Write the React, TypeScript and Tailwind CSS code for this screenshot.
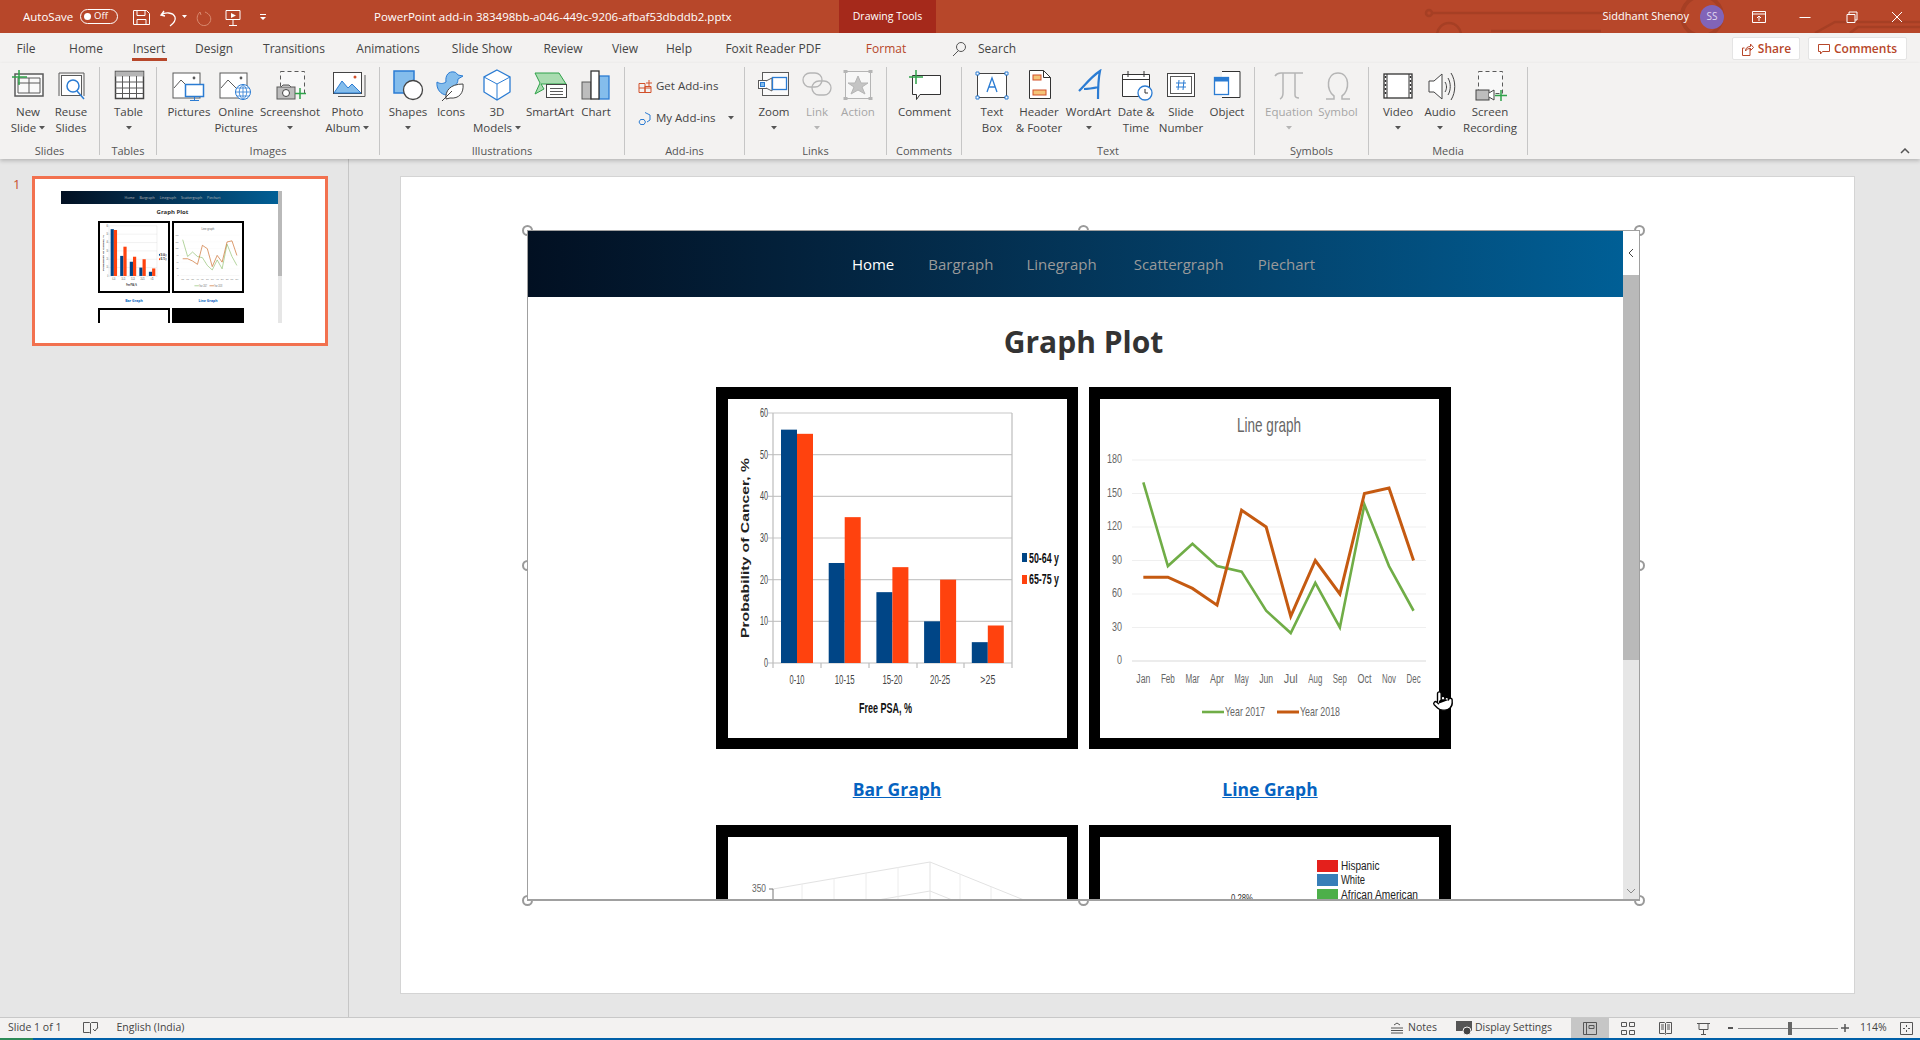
import { Fragment, type ReactNode } from 'react';
import { Pointer } from 'lucide-react';

const GRAY = '#5a5a5a';
const BLUE = '#2b7cd3';
const LIGHT = '#84bdec';
const GREEN = '#2fa24a';
const ORANGE = '#d2502a';
const DIM = '#b5b5b5';

const Mountain = () => (
  <>
    <rect x="2" y="4" width="27" height="25" fill="#fff" stroke={GRAY} />
    <path d="M3 19l7-8 8 8" fill="none" stroke={GRAY} />
    <circle cx="23" cy="9" r="1.4" fill={GRAY} />
  </>
);

const icons: Record<string, ReactNode> = {
  newSlide: (
    <>
      <rect x="5" y="5" width="28" height="22" fill="#fafafa" stroke={GRAY} strokeWidth="1.5" />
      <path d="M8 9h22v15H8zM19 9v15M8 14h22" fill="none" stroke={GRAY} />
      <path d="M9 1v15M2 8h15" stroke={GREEN} strokeWidth="1.5" />
    </>
  ),
  reuse: (
    <>
      <path d="M6 27V4h25v23" fill="none" stroke={GRAY} />
      <rect x="8.500" y="6.500" width="20" height="20" fill="#fff" stroke={GRAY} />
      <circle cx="20" cy="17" r="6" fill="#fff" stroke={BLUE} strokeWidth="1.5" />
      <path d="M24 22l7 8" stroke={BLUE} strokeWidth="1.5" />
    </>
  ),
  table: (
    <>
      <rect x="4.500" y="2.500" width="28" height="27" fill="#fff" stroke="#444" strokeWidth="1.5" />
      <rect x="4.500" y="2.500" width="28" height="5" fill="#b5b5b5" />
      <path d="M4 13h28M4 19h28M4 24.500h28M11.500 7v22M18.500 7v22M25.500 7v22" stroke={GRAY} />
    </>
  ),
  pictures: (
    <>
      <Mountain />
      <rect x="14.500" y="15.500" width="18" height="12" fill="#fff" stroke={BLUE} strokeWidth="1.5" />
      <path d="M23.500 28v3M19 31.500h9" stroke={BLUE} />
    </>
  ),
  online: (
    <>
      <Mountain />
      <circle cx="25" cy="23" r="7.500" fill="#fff" stroke={BLUE} />
      <path d="M17.500 23h15M25 15.500v15M19 19h12M19 27h12M25 15.500c-5 4-5 11 0 15M25 15.500c5 4 5 11 0 15" fill="none" stroke={BLUE} strokeWidth=".8" />
    </>
  ),
  screenshot: (
    <>
      <rect x="8.500" y="2.500" width="24" height="22" fill="#f8f8f8" stroke={GRAY} strokeDasharray="4 3" />
      <rect x="5" y="18" width="18" height="12" fill="#bdbdbd" stroke={GRAY} />
      <path d="M9 18l2-2h6l2 2" fill="#bdbdbd" stroke={GRAY} />
      <circle cx="14" cy="24" r="3.500" fill="#fff" stroke="#444" />
      <path d="M28 19v11M23 24.500h11" stroke={GREEN} strokeWidth="1.5" />
    </>
  ),
  album: (
    <>
      <path d="M8 27.500h27V6" fill="none" stroke={GRAY} />
      <rect x="3.500" y="3.500" width="28" height="21" fill="#fff" stroke="#444" />
      <path d="M4 24l8-12 6 7 4-4 9 9z" fill={LIGHT} stroke={BLUE} />
      <circle cx="25" cy="8" r="1.500" fill={ORANGE} />
    </>
  ),
  shapes: (
    <>
      <rect x="4" y="2" width="20" height="22" fill={LIGHT} stroke={BLUE} strokeWidth="1.5" />
      <circle cx="23" cy="21" r="9.500" fill="#fff" stroke="#444" strokeWidth="1.3" />
    </>
  ),
  duck: (
    <>
      <path d="M4 13c3 2 6 2 9 0-1-7 3-11 8-10 2 0 3 2 4 3l5 1-5 3c0 4-2 6-4 8l-7 8c-6 0-11-6-10-13z" fill={LIGHT} stroke={BLUE} />
      <path d="M13 30c-1-8 4-15 17-15 1 9-4 15-13 14zM9 32l10-10" fill="#fff" stroke="#444" />
    </>
  ),
  cube: (
    <>
      <path d="M18 1l13 7v15l-13 8-13-8V8z" fill="#fff" stroke={BLUE} strokeWidth="1.3" />
      <path d="M5 8l13 7 13-7M18 15v16" fill="none" stroke={BLUE} />
    </>
  ),
  smartart: (
    <>
      <path d="M3 4h24l7 11-7 0H9l3 5-9 5 5-11z" fill="#a9dcb0" stroke={GREEN} />
      <rect x="14.500" y="15.500" width="20" height="13" fill="#fff" stroke="#444" />
      <path d="M18 19.500h13M18 22.500h13M18 25.500h13" stroke={GRAY} />
    </>
  ),
  chart: (
    <>
      <rect x="4" y="13" width="9" height="17" fill="#bdbdbd" stroke={GRAY} />
      <rect x="21" y="7" width="10" height="23" fill={LIGHT} stroke={BLUE} strokeWidth="1.3" />
      <rect x="13" y="2" width="8" height="28" fill="#fff" stroke="#333" strokeWidth="1.3" />
    </>
  ),
  zoom: (
    <>
      <rect x="6.500" y="3.500" width="26" height="23" fill="#fafafa" stroke={GRAY} />
      <rect x="2.500" y="11.500" width="8" height="8" fill="#fff" stroke={GRAY} />
      <rect x="4.500" y="13.500" width="4" height="4" fill={LIGHT} stroke={BLUE} />
      <path d="M10 12l6-3v13l-6-3" fill="#fff" stroke={GRAY} />
      <rect x="16.500" y="8.500" width="14" height="12" fill="#fff" stroke={BLUE} strokeWidth="1.3" />
    </>
  ),
  link: (
    <>
      <rect x="4" y="4" width="19" height="14" rx="7" fill="none" stroke={DIM} strokeWidth="1.3" />
      <rect x="13" y="12" width="19" height="14" rx="7" fill="none" stroke={DIM} strokeWidth="1.3" />
    </>
  ),
  action: (
    <>
      <rect x="5.500" y="2.500" width="25" height="27" fill="#f7f7f7" stroke={DIM} />
      <path d="M18 7l3 7h7l-6 4 3 7-7-4-7 4 3-7-6-4h7z" fill="#c4c4c4" stroke={DIM} />
      <path d="M3.500 1h4v3h-4zM28.500 1h4v3h-4zM3.500 28h4v3h-4zM28.500 28h4v3h-4z" fill={DIM} />
    </>
  ),
  comment: (
    <>
      <path d="M4.500 6.500h28v19H12l-3.500 5v-5H4.500z" fill="#fff" stroke="#333" transform="translate(1 0)" />
      <path d="M9 1v14M2 8h14" stroke={GREEN} strokeWidth="1.5" />
    </>
  ),
  textBox: (
    <>
      <rect x="3.500" y="4.500" width="29" height="24" fill="#fff" stroke="#444" />
      <path d="M2 3h3v3H2zM31 3h3v3h-3zM2 27h3v3H2zM31 27h3v3h-3z" fill="#fff" stroke={BLUE} />
      <path d="M13 23l5-14 5 14M15 18h6" fill="none" stroke={BLUE} strokeWidth="1.3" />
    </>
  ),
  header: (
    <>
      <path d="M8.500 1.500h14l7 7v21h-21z" fill="#fff" stroke="#333" />
      <path d="M22.500 1.500v7h7" fill="none" stroke="#333" />
      <rect x="12" y="6" width="8" height="5" fill="#f4c478" stroke={ORANGE} />
      <rect x="12" y="21" width="13" height="5" fill="#f4c478" stroke={ORANGE} />
    </>
  ),
  wordart: <path d="M8 22C15 15 20 8 29 2c-2 9-2 18-2 28M13 20c5 0 10-1 15-2" fill="none" stroke={BLUE} strokeWidth="2.2" />,
  date: (
    <>
      <path d="M4.500 5.500h27v22h-27zM4.500 10.500h27M10 2v6M26 2v6" fill="#fff" stroke="#333" />
      <circle cx="27" cy="24" r="7" fill="#fff" stroke={BLUE} strokeWidth="1.3" />
      <path d="M27 20v4h3" fill="none" stroke="#333" />
    </>
  ),
  number: (
    <>
      <rect x="4.500" y="4.500" width="27" height="23" fill="#fff" stroke="#444" />
      <rect x="7.500" y="7.500" width="21" height="17" fill="#fff" stroke={GRAY} />
      <path d="M16 11l-1 10M21 11l-1 10M13 14h10M13 18h10" stroke={BLUE} />
    </>
  ),
  object: (
    <>
      <path d="M13 2.500h18v26H13" fill="#fff" stroke="#333" />
      <rect x="5.500" y="8.500" width="14" height="17" fill="#fff" stroke={BLUE} strokeWidth="1.3" />
      <rect x="5.500" y="8.500" width="14" height="4" fill={BLUE} />
    </>
  ),
  pi: <path d="M4 7c2-3 4-3 6-3h22M12 4v20c0 3-1 5-3 6M24 4v22c0 2 2 3 4 3" fill="none" stroke={DIM} strokeWidth="1.5" />,
  omega: <path d="M6 30h8v-3c-8-5-8-23 4-23s12 18 4 23v3h8" fill="none" stroke={DIM} strokeWidth="1.5" />,
  video: (
    <>
      <rect x="4" y="5" width="28" height="24" fill="#fff" stroke="#333" strokeWidth="1.3" />
      <path d="M7 5v24M29 5v24" stroke="#333" />
      <path d="M5.500 7v20M30.500 7v20" stroke="#333" strokeWidth="1.5" strokeDasharray="2 2" />
    </>
  ),
  audio: (
    <>
      <path d="M7 12h5l8-7v25l-8-7H7z" fill="#fff" stroke="#444" />
      <path d="M23 13c2 3 2 7 0 10M26 9c3 5 3 12 0 17M29 4c5 8 5 19 0 27" fill="none" stroke="#444" />
    </>
  ),
  recording: (
    <>
      <rect x="6.500" y="2.500" width="24" height="22" fill="#f8f8f8" stroke={GRAY} strokeDasharray="4 3" />
      <rect x="4" y="21" width="13" height="10" fill="#bdbdbd" stroke="#444" />
      <path d="M17 24l5-3v10l-5-3" fill="#fff" stroke="#444" />
      <path d="M29 21v11M23 26.500h12" stroke={GREEN} strokeWidth="1.5" />
    </>
  ),
};

type Btn = { icon: string; lines: string[]; w: number; caret?: boolean; off?: boolean };
type Group = { name: string; w: number; pl: number; items: Btn[] };

const groups: Group[] = [
  { name: 'Slides', w: 100, pl: 7, items: [
    { icon: 'newSlide', lines: ['New', 'Slide'], w: 42, caret: true },
    { icon: 'reuse', lines: ['Reuse', 'Slides'], w: 44 },
  ] },
  { name: 'Tables', w: 57, pl: 0, items: [{ icon: 'table', lines: ['Table', ''], w: 57, caret: true }] },
  { name: 'Images', w: 223, pl: 10, items: [
    { icon: 'pictures', lines: ['Pictures'], w: 44 },
    { icon: 'online', lines: ['Online', 'Pictures'], w: 50 },
    { icon: 'screenshot', lines: ['Screenshot', ''], w: 58, caret: true },
    { icon: 'album', lines: ['Photo', 'Album'], w: 57, caret: true },
  ] },
  { name: 'Illustrations', w: 245, pl: 6, items: [
    { icon: 'shapes', lines: ['Shapes', ''], w: 44, caret: true },
    { icon: 'duck', lines: ['Icons'], w: 42 },
    { icon: 'cube', lines: ['3D', 'Models'], w: 50, caret: true },
    { icon: 'smartart', lines: ['SmartArt'], w: 56 },
    { icon: 'chart', lines: ['Chart'], w: 36 },
  ] },
];

const groupsAfter: Group[] = [
  { name: 'Links', w: 142, pl: 7, items: [
    { icon: 'zoom', lines: ['Zoom', ''], w: 44, caret: true },
    { icon: 'link', lines: ['Link', ''], w: 42, caret: true, off: true },
    { icon: 'action', lines: ['Action'], w: 40, off: true },
  ] },
  { name: 'Comments', w: 75, pl: 0, items: [{ icon: 'comment', lines: ['Comment'], w: 75 }] },
  { name: 'Text', w: 293, pl: 8, items: [
    { icon: 'textBox', lines: ['Text', 'Box'], w: 44 },
    { icon: 'header', lines: ['Header', '& Footer'], w: 50 },
    { icon: 'wordart', lines: ['WordArt', ''], w: 49, caret: true },
    { icon: 'date', lines: ['Date &', 'Time'], w: 46 },
    { icon: 'number', lines: ['Slide', 'Number'], w: 44 },
    { icon: 'object', lines: ['Object'], w: 48 },
  ] },
  { name: 'Symbols', w: 114, pl: 10, items: [
    { icon: 'pi', lines: ['Equation', ''], w: 48, caret: true, off: true },
    { icon: 'omega', lines: ['Symbol'], w: 50, off: true },
  ] },
  { name: 'Media', w: 159, pl: 7, items: [
    { icon: 'video', lines: ['Video', ''], w: 44, caret: true },
    { icon: 'audio', lines: ['Audio', ''], w: 40, caret: true },
    { icon: 'recording', lines: ['Screen', 'Recording'], w: 60 },
  ] },
];

const tabs = [
  ['File', 52], ['Home', 68], ['Insert', 58], ['Design', 72], ['Transitions', 88], ['Animations', 100],
  ['Slide Show', 88], ['Review', 74], ['View', 50], ['Help', 58], ['Foxit Reader PDF', 130],
] as const;

function Caret({ off, className = '' }: { off?: boolean; className?: string }) {
  return (
    <svg width="6" height="4" viewBox="0 0 6 4" className={`inline-block ${className}`}>
      <path d="M0 0h6L3 3.500z" fill={off ? DIM : '#555'} />
    </svg>
  );
}

function RibbonButton({ btn }: { btn: Btn }) {
  return (
    <div className={`flex flex-col items-center shrink-0 ${btn.off ? 'text-[#a6a6a6]' : 'text-[#444]'}`} style={{ width: btn.w }}>
      <svg width="36" height="32" viewBox="0 0 36 32" className="shrink-0 mb-[3px]">
        {icons[btn.icon]}
      </svg>
      {btn.lines.map((line, i) => {
        const last = i === btn.lines.length - 1;
        return (
          <div key={i} className="h-[16px] leading-[16px] whitespace-nowrap flex items-center gap-[3px]">
            {line}
            {btn.caret && last && <Caret off={btn.off} />}
          </div>
        );
      })}
    </div>
  );
}

function RibbonGroup({ group }: { group: Group }) {
  return (
    <div className="h-[88px] pt-[2px] shrink-0 border-r border-[#c6c6c6] flex flex-col" style={{ width: group.w }}>
      <div className="h-[75px] flex shrink-0" style={{ paddingLeft: group.pl }}>
        {group.items.map((b) => (
          <RibbonButton key={b.icon} btn={b} />
        ))}
      </div>
      <div className="h-[11px] leading-[14px] text-center text-[11px] text-[#555]">{group.name}</div>
    </div>
  );
}

function AddIns() {
  return (
    <div className="w-[120px] h-[88px] shrink-0 border-r border-[#c6c6c6] flex flex-col">
      <div className="h-[77px] pl-[13px] pt-[11px] text-[#444]">
        <div className="flex items-center h-[16px] gap-[3px] whitespace-nowrap">
          <svg width="15" height="15" viewBox="0 0 15 15">
            <path d="M1 4.500h6v9H1zM7 7.500h6v6H7zM1 9h12" fill="none" stroke={ORANGE} />
            <path d="M11 1v6M8 4h6" stroke={ORANGE} />
          </svg>
          Get Add-ins
        </div>
        <div className="flex items-center h-[16px] gap-[3px] mt-[16px] whitespace-nowrap">
          <svg width="15" height="15" viewBox="0 0 15 15">
            <path d="M7 1.500l5 2.500v5l-3 2M6 13.500H2.500L1 11l1.500-2.500H6L7.500 11z" fill="none" stroke={BLUE} />
          </svg>
          My Add-ins
          <Caret className="ml-[9px]" />
        </div>
      </div>
      <div className="h-[11px] leading-[14px] text-center text-[11px] text-[#555]">Add-ins</div>
    </div>
  );
}

function Narrow({ x, y, w, size = 11, fill = '#444', anchor = 'start', weight = 400, children }: {
  x: number; y: number; w: number; size?: number; fill?: string; anchor?: 'start' | 'middle' | 'end'; weight?: number; children: string;
}) {
  return (
    <text x={x} y={y} fontSize={size} fill={fill} textAnchor={anchor} fontWeight={weight} fontFamily="'Liberation Sans', sans-serif" textLength={w} lengthAdjust="spacingAndGlyphs">
      {children}
    </text>
  );
}

const barData = [[56, 55], [24, 35], [17, 23], [10, 20], [5, 9]];
const barLabels = ['0-10', '10-15', '15-20', '20-25', '>25'];

function BarChart() {
  const yOf = (v: number) => 264 - v * 4.167;
  return (
    <svg viewBox="0 0 339 339" className="w-full h-full bg-white">
      {[10, 20, 30, 40, 50, 60].map((v) => (
        <line key={v} x1="40" x2="284" y1={yOf(v)} y2={yOf(v)} stroke="#c8c8c8" strokeWidth="1.2" />
      ))}
      <path d="M45 14v255M284 14v255M40 264h244M93 264v5M141 264v5M189 264v5M236 264v5" fill="none" stroke="#bdbdbd" strokeWidth="1.2" />
      {barData.map(([a, b], i) => (
        <Fragment key={i}>
          <rect x={53 + i * 47.7} y={yOf(a)} width="16" height={264 - yOf(a)} fill="#004586" />
          <rect x={69 + i * 47.7} y={yOf(b)} width="16" height={264 - yOf(b)} fill="#ff420e" />
          <Narrow x={69 + i * 47.7} y={285} w={i === 0 || i === 4 ? 15 : 20} size={13} anchor="middle">{barLabels[i]}</Narrow>
        </Fragment>
      ))}
      {[0, 10, 20, 30, 40, 50, 60].map((v) => (
        <Narrow key={v} x={40} y={yOf(v) + 4} w={v === 0 ? 4 : 8} size={13} anchor="end">{String(v)}</Narrow>
      ))}
      <g transform="translate(21 239) rotate(-90)">
        <Narrow x={0} y={0} w={180} size={10} weight={700} fill="#222">Probability of Cancer, %</Narrow>
      </g>
      <Narrow x={131} y={314} w={53} size={14} weight={700} fill="#111">Free PSA, %</Narrow>
      <rect x="294" y="154" width="5" height="9" fill="#004586" />
      <rect x="294" y="176" width="5" height="9" fill="#ff420e" />
      <Narrow x={301} y={164} w={30} size={14} weight={700} fill="#111">50-64 y</Narrow>
      <Narrow x={301} y={185} w={30} size={14} weight={700} fill="#111">65-75 y</Narrow>
    </svg>
  );
}

const months = ['Jan', 'Feb', 'Mar', 'Apr', 'May', 'Jun', 'Jul', 'Aug', 'Sep', 'Oct', 'Nov', 'Dec'];
const y2017 = [160, 85, 105, 85, 80, 45, 25, 70, 30, 140, 85, 45];
const y2018 = [75, 75, 65, 50, 135, 120, 40, 90, 60, 150, 155, 90];

function LineChart() {
  const px = (i: number) => (190 + 73.7 * i) / 3 - 20;
  const py = (v: number) => (843 - v * 3.35) / 3 - 19;
  const pts = (d: number[]) => d.map((v, i) => `${px(i)},${py(v)}`).join(' ');
  return (
    <svg viewBox="0 0 339 339" className="w-full h-full bg-white">
      <Narrow x={137} y={33} w={64} size={21} fill="#666">Line graph</Narrow>
      {[0, 30, 60, 90, 120, 150, 180].map((v) => (
        <Fragment key={v}>
          <line x1="32" x2="326" y1={py(v)} y2={py(v)} stroke={v === 0 ? '#d9d9d9' : '#efefef'} />
          <Narrow x={22} y={py(v) + 3} w={v > 90 ? 15 : v === 0 ? 5 : 10} size={12} fill="#666" anchor="end">{String(v)}</Narrow>
        </Fragment>
      ))}
      {months.map((m, i) => (
        <Narrow key={m} x={px(i)} y={284} w={14} size={12} fill="#666" anchor="middle">{m}</Narrow>
      ))}
      <polyline points={pts(y2017)} fill="none" stroke="#70ad47" strokeWidth="2.6" />
      <polyline points={pts(y2018)} fill="none" stroke="#c55a11" strokeWidth="3" />
      <line x1="102" x2="124" y1="313" y2="313" stroke="#70ad47" strokeWidth="2.6" />
      <line x1="177" x2="199" y1="313" y2="313" stroke="#c55a11" strokeWidth="3" />
      <Narrow x={125} y={317} w={40} size={13} fill="#666">Year 2017</Narrow>
      <Narrow x={200} y={317} w={40} size={13} fill="#666">Year 2018</Narrow>
    </svg>
  );
}

function Surface() {
  return (
    <svg viewBox="0 0 339 339" className="w-full h-full bg-white">
      <path d="M45 52L202 25l94 38M45 81l157-27 94 38M202 25v60" fill="none" stroke="#e2e2e2" />
      <path d="M74 47v40M106 41v40M138 36v40M170 30v40M232 37v40M263 50v40" stroke="#ececec" />
      <path d="M45 52v30M41 52h4" fill="none" stroke="#777" />
      <Narrow x={38} y={55} w={14} size={11} fill="#666" anchor="end">350</Narrow>
    </svg>
  );
}

function Pie() {
  const rows: [string, string, number][] = [['Hispanic', '#e4201c', 24], ['White', '#377eb8', 38], ['African American', '#4daf4a', 53]];
  return (
    <svg viewBox="0 0 339 339" className="w-full h-full bg-white">
      {rows.map(([t, c, y]) => (
        <Fragment key={t}>
          <rect x="217" y={y - 1} width="21" height="12" fill={c} />
          <Narrow x={241} y={y + 9} w={t.length > 10 ? 77 : t.length * 4.8} size={12} fill="#222">{t}</Narrow>
        </Fragment>
      ))}
      <Narrow x={131} y={65} w={22} size={11} fill="#333">0.28%</Narrow>
    </svg>
  );
}

function ChartFrame({ flip, children }: { flip?: boolean; children: ReactNode }) {
  return (
    <div className={`w-[362px] h-[362px] shrink-0 bg-black pt-[12px] pb-[11px] ${flip ? 'pl-[11px] pr-[12px]' : 'pl-[12px] pr-[11px]'}`}>
      {children}
    </div>
  );
}

function Handle({ className }: { className: string }) {
  return <div className={`absolute w-[11px] h-[11px] rounded-full bg-white border-2 border-[#9a9a9a] ${className}`} />;
}

function Thumbnail() {
  return (
    <div className="w-[296px] h-[170px] border-[3px] border-[#f2714f] bg-white pt-[12px] pl-[26px] shrink-0">
      <div className="w-[221px] h-[132px] flex overflow-hidden">
        <div className="w-[217px] shrink-0">
          <div className="h-[13px] bg-gradient-to-r from-[#021022] to-[#005f96] flex items-center justify-center gap-[5px] pl-[6px] text-[3.5px] text-[#bbb] whitespace-nowrap">
            <span>Home</span><span>Bargraph</span><span>Linegraph</span><span>Scattergraph</span><span>Piechart</span>
          </div>
          <div className="h-[17px] flex items-center justify-center pl-[6px] font-bold text-[6px] text-[#333]">Graph Plot</div>
          <div className="flex gap-[2px] pl-[37px]">
            <div className="w-[72px] h-[72px] bg-black p-[2px]"><BarChart /></div>
            <div className="w-[72px] h-[72px] bg-black p-[2px]"><LineChart /></div>
          </div>
          <div className="flex gap-[2px] pl-[37px] h-[15px] items-center text-center text-[3.5px] font-bold text-[#0563c1]">
            <div className="w-[72px]">Bar Graph</div>
            <div className="w-[72px]">Line Graph</div>
          </div>
          <div className="flex gap-[2px] pl-[37px]">
            <div className="w-[72px] h-[15px] bg-black pt-[2px] px-[2px]"><div className="h-full bg-white" /></div>
            <div className="w-[72px] h-[15px] bg-black" />
          </div>
        </div>
        <div className="w-[4px] bg-[#e6e6e6]"><div className="h-[85px] bg-[#b9b9b9]" /></div>
      </div>
    </div>
  );
}

export default function App() {
  return (
    <div className="relative w-[1920px] h-[1040px] overflow-hidden flex flex-col bg-[#e6e6e6] font-['Open_Sans',sans-serif] text-[11.5px]">
      {/* title bar */}
      <div className="relative h-[33px] shrink-0 bg-[#b7472a] text-white flex items-center overflow-hidden">
        <svg className="absolute right-0 top-0" width="500" height="33" viewBox="1420 0 500 33">
          <g fill="none" stroke="#a63f24" strokeWidth="2.5">
            <circle cx="1429" cy="13" r="3" />
            <path d="M1432 13h250" />
            <circle cx="1449" cy="35" r="12" />
            <path d="M1491 31h110" />
            <circle cx="1702" cy="16" r="20" strokeWidth="4" />
            <path d="M1815 33l20-11h85M1850 33l8-6h62" />
          </g>
        </svg>
        <span className="ml-[23px] w-[57px]">AutoSave</span>
        <div className="w-[38px] h-[15px] rounded-full border border-white flex items-center pl-[3px] gap-[3px] text-[9.5px]">
          <span className="w-[7px] h-[7px] rounded-full bg-white" />
          <span>Off</span>
        </div>
        <svg width="156" height="20" viewBox="0 0 156 20" className="ml-[15px] shrink-0">
          <g fill="none" stroke="#fff">
            <path d="M.500 3.500h13l3 3v11H.500zM4 3.500v5h8v-5M4 17.500v-5h9v5" />
            <path d="M31 4l-3 4 4 1M28 8c4-3 12-3 14 2 1 3-1 6-5 9" strokeWidth="1.3" />
            <path d="M64 5c5 2 7 6 5 10s-8 5-11 1-2-8 1-11l1 3" stroke="#d98a70" transform="translate(8 0)" />
            <path d="M93 3.500h14v9H93zM100 13v6M96 18.500h8" />
          </g>
          <path d="M49 8h5l-2.500 3zM98 6l5 2.500-5 2.500zM127 10h6l-3 3zM127 7h6v1h-6z" fill="#fff" />
        </svg>
        <span className="absolute left-[374px] text-[11.5px] whitespace-nowrap">PowerPoint add-in 383498bb-a046-449c-9206-afbaf53dbddb2.pptx</span>
        <div className="absolute left-[839px] w-[97px] h-full bg-[#a5291b] flex items-center justify-center text-[10.5px]">Drawing Tools</div>
        <div className="relative ml-auto flex items-center h-full">
          <span className="text-[11px] mr-[11px]">Siddhant Shenoy</span>
          <div className="w-[24px] h-[24px] rounded-full bg-[#8164b8] flex items-center justify-center text-[10px] text-[#e0d8f0] mr-[28px]">SS</div>
          <svg width="152" height="16" viewBox="0 0 152 16" className="mr-[16px]" fill="none" stroke="#fff">
            <path d="M.500 2.500h13v11H.500zM1 5h12M7 12V7M5 9l2-2 2 2" />
            <path d="M47.500 8.500h11" />
            <path d="M95 5.500h8v8h-8zM97 5V3h8v8h-2" />
            <path d="M140 3l10 10M150 3l-10 10" />
          </svg>
        </div>
      </div>

      {/* tabs */}
      <div className="relative h-[30px] pt-[1px] shrink-0 bg-[#f3f2f1] flex items-center text-[12px] text-[#444]">
        {tabs.map(([t, w]) => (
          <div key={t} className="relative h-full flex items-center justify-center" style={{ width: w }}>
            {t}
            {t === 'Insert' && <span className="absolute left-[12px] right-[11px] bottom-[2px] h-[3px] bg-[#b7472a]" />}
          </div>
        ))}
        <div className="w-[96px] text-center text-[#b7472a]">Format</div>
        <svg width="16" height="16" viewBox="0 0 16 16" className="ml-[17px]" fill="none" stroke="#555">
          <circle cx="10" cy="6" r="4.500" />
          <path d="M7 10l-5 5" />
        </svg>
        <span className="ml-[11px]">Search</span>
        <div className="ml-auto flex gap-[8px] pr-[13px] font-semibold text-[#b7472a] text-[12px]">
          <div className="w-[68px] h-[23px] bg-white border border-[#e4e4e4] flex items-center justify-center gap-[4px] rounded-[2px]">
            <svg width="13" height="14" viewBox="0 0 13 14" fill="none" stroke="#b7472a">
              <path d="M9 6v7.500H1.500V6h2M4.500 9c0-3 2-4.500 5-4.500V2l3 3.500-3 3V6.500c-2 0-4 .5-5 2.500z" />
            </svg>
            Share
          </div>
          <div className="w-[99px] h-[23px] bg-white border border-[#e4e4e4] flex items-center justify-center gap-[4px] rounded-[2px]">
            <svg width="12" height="12" viewBox="0 0 12 12" fill="none" stroke="#b7472a">
              <path d="M.500 1.500h11v7h-7l-2 2.500V8.500h-2z" />
            </svg>
            Comments
          </div>
        </div>
      </div>

      {/* ribbon */}
      <div className="relative z-10 h-[96px] shrink-0 bg-[#f3f2f1] pt-[4px] flex shadow-[0_2px_4px_rgba(0,0,0,0.2)]">
        {groups.map((g) => <RibbonGroup key={g.name} group={g} />)}
        <AddIns />
        {groupsAfter.map((g) => <RibbonGroup key={g.name} group={g} />)}
        <svg width="10" height="6" viewBox="0 0 10 6" className="absolute right-[10px] bottom-[5px]" fill="none" stroke="#555" strokeWidth="1.5">
          <path d="M1 5l4-4 4 4" />
        </svg>
      </div>

      {/* body */}
      <div className="flex-1 flex min-h-0">
        <div className="w-[349px] shrink-0 border-r border-[#c6c6c6] pt-[17px] flex">
          <span className="w-[32px] pl-[13px] text-[13px] leading-[16px] text-[#c8502f]">1</span>
          <Thumbnail />
        </div>
        <div className="flex-1 min-w-0 pl-[51px] pt-[17px]">
          <div className="w-[1455px] h-[818px] bg-white border border-[#d4d4d4] pl-[126px] pt-[53px]">
            <div className="relative w-[1113px] h-[671px]">
              <Handle className="-left-[5px] -top-[5px]" />
              <Handle className="left-[551px] -top-[5px]" />
              <Handle className="-right-[5px] -top-[5px]" />
              <Handle className="-left-[5px] top-[330px]" />
              <Handle className="-right-[5px] top-[330px]" />
              <Handle className="-left-[5px] -bottom-[5px]" />
              <Handle className="left-[551px] -bottom-[5px]" />
              <Handle className="-right-[5px] -bottom-[5px]" />
              <div className="relative h-full border border-[#a0a0a0] border-b-2 flex bg-white overflow-hidden">
                <div className="flex-1 min-w-0 overflow-hidden">
                  <div className="h-[66px] bg-gradient-to-r from-[#021022] to-[#005f96] flex items-center justify-center gap-[34px] pl-[16px] text-[15px] text-[#9a9a9a]">
                    <span className="text-white">Home</span>
                    <span>Bargraph</span>
                    <span className="-ml-[1px]">Linegraph</span>
                    <span className="ml-[3px]">Scattergraph</span>
                    <span>Piechart</span>
                  </div>
                  <div className="h-[90px] pb-[2px] pl-[16px] flex items-center justify-center text-[30px] font-bold text-[#333]">Graph Plot</div>
                  <div className="flex justify-center gap-[11px] pl-[16px]">
                    <ChartFrame><BarChart /></ChartFrame>
                    <ChartFrame flip><LineChart /></ChartFrame>
                  </div>
                  <div className="h-[76px] pt-[5px] pl-[16px] flex justify-center items-center gap-[11px] text-[17.500px] font-bold text-[#0563c1] underline">
                    <div className="w-[362px] text-center">Bar Graph</div>
                    <div className="w-[362px] text-center">Line Graph</div>
                  </div>
                  <div className="flex justify-center gap-[11px] pl-[16px]">
                    <ChartFrame><Surface /></ChartFrame>
                    <ChartFrame flip><Pie /></ChartFrame>
                  </div>
                </div>
                <div className="w-[16px] shrink-0 flex flex-col bg-[#e6e6e6]">
                  <div className="h-[44px] bg-white flex items-center justify-center">
                    <svg width="6" height="10" viewBox="0 0 6 10" fill="none" stroke="#444"><path d="M5 1L1 5l4 4" /></svg>
                  </div>
                  <div className="h-[385px] bg-[#b9b9b9]" />
                  <div className="mt-auto h-[16px] flex items-center justify-center">
                    <svg width="10" height="6" viewBox="0 0 10 6" fill="none" stroke="#888"><path d="M1 1l4 4 4-4" /></svg>
                  </div>
                </div>
              </div>
            </div>
          </div>
        </div>
      </div>

      {/* status bar */}
      <div className="h-[23px] shrink-0 flex flex-col">
        <div className="h-[21px] bg-[#f3f2f1] border-t border-[#c8c8c8] flex items-center text-[10.5px] text-[#444] relative">
          <span className="ml-[8px]">Slide 1 of 1</span>
          <svg width="16" height="14" viewBox="0 0 16 14" className="ml-[22px]" fill="none" stroke="#555">
            <path d="M.500 1.500h6l1 1 1-1h6v6M.500 1.500v10h6l1 1V2.500M10 8l2 2 3-4" />
          </svg>
          <span className="ml-[17px]">English (India)</span>
          <div className="ml-auto flex items-center h-full">
            <svg width="14" height="12" viewBox="0 0 14 12" stroke="#555" fill="none"><path d="M4 3l3-2 3 2M1 6h12M1 8.500h12M1 11h12" /></svg>
            <span className="ml-[4px]">Notes</span>
            <svg width="18" height="15" viewBox="0 0 18 15" className="ml-[19px]">
              <rect x="0" y="0" width="16" height="10" fill="#555" />
              <circle cx="11" cy="10" r="4" fill="#444" stroke="#f3f2f1" />
            </svg>
            <span className="ml-[1px]">Display Settings</span>
            <div className="ml-[19px] w-[38px] h-full bg-[#c6c6c6] flex items-center justify-center">
              <svg width="14" height="13" viewBox="0 0 14 13" fill="none" stroke="#555"><path d="M.500.500h13v12H.500zM3.500.500v12M6 3.500h5v3H6z" /></svg>
            </div>
            <svg width="14" height="13" viewBox="0 0 14 13" className="ml-[12px]" fill="none" stroke="#555"><path d="M.500.500h5v4h-5zM8.500.500h5v4h-5zM.500 8.500h5v4h-5zM8.500 8.500h5v4h-5z" /></svg>
            <svg width="13" height="13" viewBox="0 0 13 13" className="ml-[24px]" fill="none" stroke="#555"><path d="M.500.500h5l1 1 1-1h5v11h-5l-1 1-1-1h-5zM6.500 1.500v10M2 3h3M2 5h3M2 7h3M8 3h3M8 5h3M8 7h3" /></svg>
            <svg width="13" height="13" viewBox="0 0 13 13" className="ml-[25px]" fill="none" stroke="#555"><path d="M0 1.500h13M2 1.500v6h9v-6M6.500 8v4M4 12.500h5" /></svg>
            <div className="ml-[18px] w-[5px] h-[2px] bg-[#555]" />
            <div className="relative ml-[5px] w-[100px] h-px bg-[#888]">
              <div className="absolute left-[50px] -top-[6px] w-[4px] h-[13px] bg-[#666]" />
            </div>
            <svg width="8" height="8" viewBox="0 0 8 8" className="ml-[3px]" stroke="#555" strokeWidth="1.5"><path d="M0 4h8M4 0v8" /></svg>
            <span className="ml-[11px] w-[27px]">114%</span>
            <svg width="13" height="13" viewBox="0 0 13 13" className="ml-[13px] mr-[7px]" fill="none" stroke="#555"><path d="M.500.500h12v12H.500zM6.500 3v2M6.500 8v2M3 6.500h2M8 6.500h2" /></svg>
          </div>
        </div>
        <div className="flex-1 bg-[#0060a8] flex"><div className="w-[33px] bg-[#2e8b57]" /></div>
      </div>

      {/* mouse pointer over the slide */}
      <Pointer className="absolute left-[1432px] top-[689px] w-[22px] h-[24px]" fill="#fff" stroke="#000" strokeWidth={1.5} />
    </div>
  );
}
